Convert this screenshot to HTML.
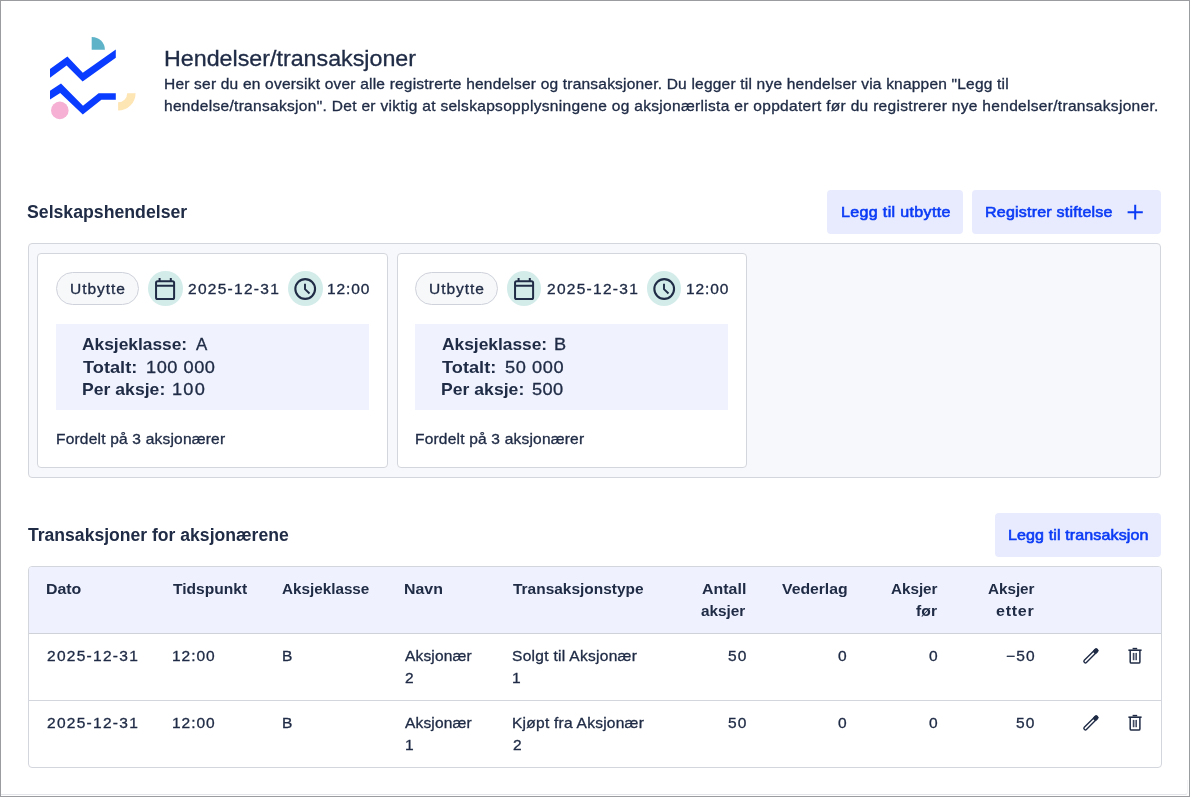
<!DOCTYPE html>
<html lang="nb">
<head>
<meta charset="utf-8">
<title>Hendelser/transaksjoner</title>
<style>
html,body{margin:0;padding:0;background:#fff;}
body{width:1190px;height:797px;position:relative;overflow:hidden;font-family:"Liberation Sans",sans-serif;color:#202c46;}
.abs{position:absolute;box-sizing:border-box;}
.t{position:absolute;white-space:nowrap;line-height:normal;font-weight:400;transform-origin:0 0;-webkit-text-stroke:0.3px currentColor;}
.t.b{-webkit-text-stroke:0;}
.t.m{-webkit-text-stroke:0.6px currentColor;}
.frame{left:0;top:0;width:1190px;height:797px;border:1px solid #9b9c9f;z-index:9;pointer-events:none;}
.frame2{left:1px;top:780px;width:1187px;height:15px;border-bottom:1px solid #e4e5ea;border-right:1px solid #f4f4f7;border-radius:0 0 3px 0;}
h1,h2,p{margin:0;}
.btn{background:#e7ebfd;border-radius:4px;border:0;padding:0;margin:0;font:inherit;color:inherit;display:block;cursor:pointer;}
.panel{left:28px;top:243px;width:1133px;height:235px;background:#f7f8fb;border:1px solid #d4d6dd;border-radius:4px;}
.card{top:253px;height:215px;background:#fff;border:1px solid #d4d6dd;border-radius:4px;}
.chip{top:272px;width:83px;height:33px;border:1px solid #cfd2db;border-radius:17px;background:#f7f8fa;}
.circ{width:34.6px;height:34.6px;border-radius:50%;background:#d3ecea;top:271.1px;}
.box{top:324px;height:86px;width:313px;background:#f0f3fe;}
.table{left:28px;top:566px;width:1134px;height:202px;border:1px solid #d4d6dd;border-radius:4px;background:#fff;overflow:hidden;}
.thead{left:0;top:0;width:100%;height:67px;background:#eff2fe;border-bottom:1px solid #d0d2da;}
.rowline{left:0;top:133px;width:100%;height:1px;background:#d4d6dd;}
svg{position:absolute;overflow:visible;}
</style>
</head>
<body>
<div class="abs frame2"></div>

<!-- logo -->
<svg style="left:0;top:0" width="160" height="140" viewBox="0 0 160 140">
  <path d="M91.7 49.8 V36.9 A13 13 0 0 1 104.9 49.8 Z" fill="#5eb3c8"/>
  <polygon points="50,69 67.4,56.6 82.8,72.8 115.8,49.4 115.8,57.8 82.6,81.4 66.6,65.6 50,77.8" fill="#0a3cff"/>
  <polygon points="50,90.8 61,83.6 83,105.8 98.6,93.3 115.8,93.3 115.8,99.8 101.4,99.8 82.8,114.6 60.2,93 50,99.6" fill="#0a3cff"/>
  <circle cx="59.8" cy="110.4" r="8.8" fill="#f5b0d3"/>
  <path d="M118.1 93.3 H135.6 A17.4 17.4 0 0 1 118.1 110.6 V102.3 A9 9 0 0 0 127.2 93.3 Z" fill="#fde5b4"/>
</svg>

<!-- buttons -->

<!-- panel + cards -->
<div class="abs panel"></div>
<div class="abs card" style="left:37px;width:351px"></div>
<div class="abs chip" style="left:56.0px"></div>
<div class="abs circ" style="left:148.2px"></div>
<div class="abs circ" style="left:288.2px"></div>
<div class="abs box" style="left:56.0px"></div>
<svg style="left:0.0px;top:0" width="400" height="320"><g fill="none" stroke="#202c46" stroke-width="2"><rect x="156.05" y="281.25" width="18.05" height="17.8" rx="1.6"/><path d="M156 285.7 H174.1 M159.6 278 V281.3 M170.8 278 V281.3"/></g><g fill="none" stroke="#202c46"><circle cx="305.2" cy="289.0" r="9.85" stroke-width="2.1"/><path d="M305 283.7 V289.2 L309.5 293.5" stroke-width="1.9"/></g></svg>
<div class="abs card" style="left:397px;width:350px"></div>
<div class="abs chip" style="left:415.4px"></div>
<div class="abs circ" style="left:506.8px"></div>
<div class="abs circ" style="left:646.8px"></div>
<div class="abs box" style="left:415.4px"></div>
<svg style="left:358.6px;top:0" width="400" height="320"><g fill="none" stroke="#202c46" stroke-width="2"><rect x="156.05" y="281.25" width="18.05" height="17.8" rx="1.6"/><path d="M156 285.7 H174.1 M159.6 278 V281.3 M170.8 278 V281.3"/></g><g fill="none" stroke="#202c46"><circle cx="305.2" cy="289.0" r="9.85" stroke-width="2.1"/><path d="M305 283.7 V289.2 L309.5 293.5" stroke-width="1.9"/></g></svg>

<!-- table -->
<div class="abs table">
  <div class="abs thead"></div>
  <div class="abs rowline"></div>
</div>
<svg style="left:0;top:0px" width="1190" height="700"><g fill="none" stroke="#202c46" stroke-linejoin="round"><g transform="translate(1090.85 655.9) rotate(-45)"><rect x="-9.1" y="-1.5" width="18.1" height="3" rx="1.3" stroke-width="1.4"/><rect x="4.9" y="-1.5" width="4.1" height="3" rx="1.2" fill="#202c46" stroke-width="1.4"/></g><path d="M1128.4 650.2 H1141.6" stroke-width="1.6"/><path d="M1132.6 648.6 H1137.2" stroke-width="1.5"/><path d="M1130.2 650.4 V661.9 Q1130.2 663.1 1131.4 663.1 H1138.7 Q1139.9 663.1 1139.9 661.9 V650.4" stroke-width="1.5"/><rect x="1133.3" y="653" width="3" height="7.2" fill="#a9adb8" stroke="none"/><path d="M1133.3 652.9 V660.2 M1136.3 652.9 V660.2" stroke-width="1"/></g></svg>
<svg style="left:0;top:67px" width="1190" height="700"><g fill="none" stroke="#202c46" stroke-linejoin="round"><g transform="translate(1090.85 655.9) rotate(-45)"><rect x="-9.1" y="-1.5" width="18.1" height="3" rx="1.3" stroke-width="1.4"/><rect x="4.9" y="-1.5" width="4.1" height="3" rx="1.2" fill="#202c46" stroke-width="1.4"/></g><path d="M1128.4 650.2 H1141.6" stroke-width="1.6"/><path d="M1132.6 648.6 H1137.2" stroke-width="1.5"/><path d="M1130.2 650.4 V661.9 Q1130.2 663.1 1131.4 663.1 H1138.7 Q1139.9 663.1 1139.9 661.9 V650.4" stroke-width="1.5"/><rect x="1133.3" y="653" width="3" height="7.2" fill="#a9adb8" stroke="none"/><path d="M1133.3 652.9 V660.2 M1136.3 652.9 V660.2" stroke-width="1"/></g></svg>

<div class="abs" style="left:0;top:0;width:1190px;height:797px;will-change:transform;">
<h1 class="t" style="left:164.00px;top:46.00px;font-size:22px;letter-spacing:0.006px;transform:scaleX(1.0564);">Hendelser/transaksjoner</h1>
<p class="t" style="left:163.80px;top:76.00px;font-size:14.5px;letter-spacing:0.187px;transform:scaleX(1.0700);">Her ser du en oversikt over alle registrerte hendelser og transaksjoner. Du legger til nye hendelser via knappen &quot;Legg til</p>
<p class="t" style="left:163.80px;top:98.00px;font-size:14.5px;letter-spacing:0.284px;transform:scaleX(1.0700);">hendelse/transaksjon&quot;. Det er viktig at selskapsopplysningene og aksjonærlista er oppdatert før du registrerer nye hendelser/transaksjoner.</p>
<h2 class="t b" style="left:26.88px;top:202.00px;font-size:17.5px;transform:scaleX(1.0104);font-weight:700;">Selskapshendelser</h2>
<h2 class="t b" style="left:28.49px;top:525.00px;font-size:17.5px;transform:scaleX(1.0039);font-weight:700;">Transaksjoner for aksjonærene</h2>
<button type="button" class="abs btn" style="left:827px;top:190px;width:136px;height:44px"><span class="t m" style="left:13.60px;top:13.00px;font-size:15px;letter-spacing:0.312px;transform:scaleX(1.0700);color:#0b3bf5;">Legg til utbytte</span></button>
<button type="button" class="abs btn" style="left:972px;top:190px;width:189px;height:44px"><span class="t m" style="left:13.40px;top:13.00px;font-size:15px;letter-spacing:0.181px;transform:scaleX(1.0700);color:#0b3bf5;">Registrer stiftelse</span><svg style="left:155px;top:14px" width="16" height="16" viewBox="0 0 16 16"><path d="M8.2 0.8 V15.6 M0.6 8.3 H15.8" stroke="#0b3bf5" stroke-width="2" fill="none"/></svg></button>
<button type="button" class="abs btn" style="left:995px;top:513px;width:166px;height:44px"><span class="t m" style="left:13.20px;top:13.00px;font-size:15px;letter-spacing:0.105px;transform:scaleX(1.0700);color:#0b3bf5;">Legg til transaksjon</span></button>
<span class="t" style="left:70.00px;top:281.00px;font-size:14.5px;letter-spacing:0.875px;transform:scaleX(1.0700);">Utbytte</span>
<span class="t" style="left:187.62px;top:281.00px;font-size:14.5px;letter-spacing:1.183px;transform:scaleX(1.0700);">2025-12-31</span>
<span class="t" style="left:326.60px;top:281.00px;font-size:14.5px;letter-spacing:0.842px;transform:scaleX(1.0700);">12:00</span>
<span class="t b" style="left:82.40px;top:335.00px;font-size:17px;letter-spacing:-0.026px;transform:scaleX(1.0233);font-weight:700;">Aksjeklasse:</span>
<span class="t" style="left:195.60px;top:335.00px;font-size:17px;transform:scaleX(0.9925);">A</span>
<span class="t b" style="left:82.90px;top:358.00px;font-size:17px;letter-spacing:0.016px;transform:scaleX(1.0700);font-weight:700;">Totalt:</span>
<span class="t" style="left:145.78px;top:358.00px;font-size:17px;letter-spacing:0.495px;transform:scaleX(1.0700);">100 000</span>
<span class="t b" style="left:81.90px;top:380.00px;font-size:17px;letter-spacing:0.032px;transform:scaleX(1.0324);font-weight:700;">Per aksje:</span>
<span class="t" style="left:172.38px;top:380.00px;font-size:17px;letter-spacing:1.121px;transform:scaleX(1.0700);">100</span>
<span class="t" style="left:56.00px;top:431.00px;font-size:14.5px;letter-spacing:0.187px;transform:scaleX(1.0700);">Fordelt på 3 aksjonærer</span>
<span class="t" style="left:429.30px;top:281.00px;font-size:14.5px;letter-spacing:0.875px;transform:scaleX(1.0700);">Utbytte</span>
<span class="t" style="left:546.92px;top:281.00px;font-size:14.5px;letter-spacing:1.183px;transform:scaleX(1.0700);">2025-12-31</span>
<span class="t" style="left:685.90px;top:281.00px;font-size:14.5px;letter-spacing:0.842px;transform:scaleX(1.0700);">12:00</span>
<span class="t b" style="left:441.70px;top:335.00px;font-size:17px;letter-spacing:-0.026px;transform:scaleX(1.0233);font-weight:700;">Aksjeklasse:</span>
<span class="t" style="left:553.78px;top:335.00px;font-size:17px;transform:scaleX(1.0700);">B</span>
<span class="t b" style="left:442.20px;top:358.00px;font-size:17px;letter-spacing:0.016px;transform:scaleX(1.0700);font-weight:700;">Totalt:</span>
<span class="t" style="left:504.51px;top:358.00px;font-size:17px;letter-spacing:0.559px;transform:scaleX(1.0700);">50 000</span>
<span class="t b" style="left:441.20px;top:380.00px;font-size:17px;letter-spacing:0.032px;transform:scaleX(1.0324);font-weight:700;">Per aksje:</span>
<span class="t" style="left:532.31px;top:380.00px;font-size:17px;letter-spacing:0.407px;transform:scaleX(1.0700);">500</span>
<span class="t" style="left:415.30px;top:431.00px;font-size:14.5px;letter-spacing:0.187px;transform:scaleX(1.0700);">Fordelt på 3 aksjonærer</span>
<span class="t b" style="left:46.20px;top:580.00px;font-size:15px;letter-spacing:-0.017px;transform:scaleX(1.0615);font-weight:700;">Dato</span>
<span class="t b" style="left:173.20px;top:580.00px;font-size:15px;transform:scaleX(1.0376);font-weight:700;">Tidspunkt</span>
<span class="t b" style="left:282.35px;top:580.00px;font-size:15px;letter-spacing:-0.014px;transform:scaleX(1.0183);font-weight:700;">Aksjeklasse</span>
<span class="t b" style="left:404.10px;top:580.00px;font-size:15px;transform:scaleX(1.0597);font-weight:700;">Navn</span>
<span class="t b" style="left:512.70px;top:580.00px;font-size:15px;letter-spacing:0.006px;transform:scaleX(1.0300);font-weight:700;">Transaksjonstype</span>
<span class="t b" style="left:702.03px;top:580.00px;font-size:15px;letter-spacing:0.035px;transform:scaleX(1.0596);font-weight:700;">Antall</span>
<span class="t b" style="left:701.40px;top:602.00px;font-size:15px;letter-spacing:-0.047px;transform:scaleX(1.0247);font-weight:700;">aksjer</span>
<span class="t b" style="left:781.71px;top:580.00px;font-size:15px;letter-spacing:-0.034px;transform:scaleX(1.0531);font-weight:700;">Vederlag</span>
<span class="t b" style="left:890.86px;top:580.00px;font-size:15px;letter-spacing:-0.018px;transform:scaleX(1.0153);font-weight:700;">Aksjer</span>
<span class="t b" style="left:916.10px;top:602.00px;font-size:15px;letter-spacing:0.065px;transform:scaleX(1.0434);font-weight:700;">før</span>
<span class="t b" style="left:987.76px;top:580.00px;font-size:15px;letter-spacing:-0.018px;transform:scaleX(1.0153);font-weight:700;">Aksjer</span>
<span class="t b" style="left:996.38px;top:602.00px;font-size:15px;letter-spacing:0.701px;transform:scaleX(1.0700);font-weight:700;">etter</span>
<span class="t" style="left:46.62px;top:648.00px;font-size:14.5px;letter-spacing:1.183px;transform:scaleX(1.0700);">2025-12-31</span>
<span class="t" style="left:172.20px;top:648.00px;font-size:14.5px;letter-spacing:0.889px;transform:scaleX(1.0700);">12:00</span>
<span class="t" style="left:282.00px;top:648.00px;font-size:14.5px;transform:scaleX(1.0700);">B</span>
<span class="t" style="left:405.10px;top:648.00px;font-size:14.5px;letter-spacing:0.143px;transform:scaleX(1.0700);">Aksjonær</span>
<span class="t" style="left:405.12px;top:670.00px;font-size:14.5px;transform:scaleX(1.0700);">2</span>
<span class="t" style="left:512.05px;top:648.00px;font-size:14.5px;letter-spacing:0.272px;transform:scaleX(1.0700);">Solgt til Aksjonær</span>
<span class="t" style="left:512.00px;top:670.00px;font-size:14.5px;transform:scaleX(1.0700);">1</span>
<span class="t" style="left:727.50px;top:648.00px;font-size:14.5px;letter-spacing:1.070px;transform:scaleX(1.0700);">50</span>
<span class="t" style="left:838.40px;top:648.00px;font-size:14.5px;transform:scaleX(1.0700);">0</span>
<span class="t" style="left:929.10px;top:648.00px;font-size:14.5px;transform:scaleX(1.0700);">0</span>
<span class="t" style="left:1006.00px;top:648.00px;font-size:14.5px;letter-spacing:1.058px;transform:scaleX(1.0700);">−50</span>
<span class="t" style="left:46.62px;top:715.00px;font-size:14.5px;letter-spacing:1.183px;transform:scaleX(1.0700);">2025-12-31</span>
<span class="t" style="left:172.20px;top:715.00px;font-size:14.5px;letter-spacing:0.889px;transform:scaleX(1.0700);">12:00</span>
<span class="t" style="left:282.00px;top:715.00px;font-size:14.5px;transform:scaleX(1.0700);">B</span>
<span class="t" style="left:405.10px;top:715.00px;font-size:14.5px;letter-spacing:0.143px;transform:scaleX(1.0700);">Aksjonær</span>
<span class="t" style="left:404.50px;top:737.00px;font-size:14.5px;transform:scaleX(1.0700);">1</span>
<span class="t" style="left:511.70px;top:715.00px;font-size:14.5px;letter-spacing:0.231px;transform:scaleX(1.0700);">Kjøpt fra Aksjonær</span>
<span class="t" style="left:512.62px;top:737.00px;font-size:14.5px;transform:scaleX(1.0700);">2</span>
<span class="t" style="left:727.50px;top:715.00px;font-size:14.5px;letter-spacing:1.070px;transform:scaleX(1.0700);">50</span>
<span class="t" style="left:838.40px;top:715.00px;font-size:14.5px;transform:scaleX(1.0700);">0</span>
<span class="t" style="left:929.10px;top:715.00px;font-size:14.5px;transform:scaleX(1.0700);">0</span>
<span class="t" style="left:1016.00px;top:715.00px;font-size:14.5px;letter-spacing:1.070px;transform:scaleX(1.0700);">50</span>
</div>
<div class="abs frame"></div>
</body>
</html>
